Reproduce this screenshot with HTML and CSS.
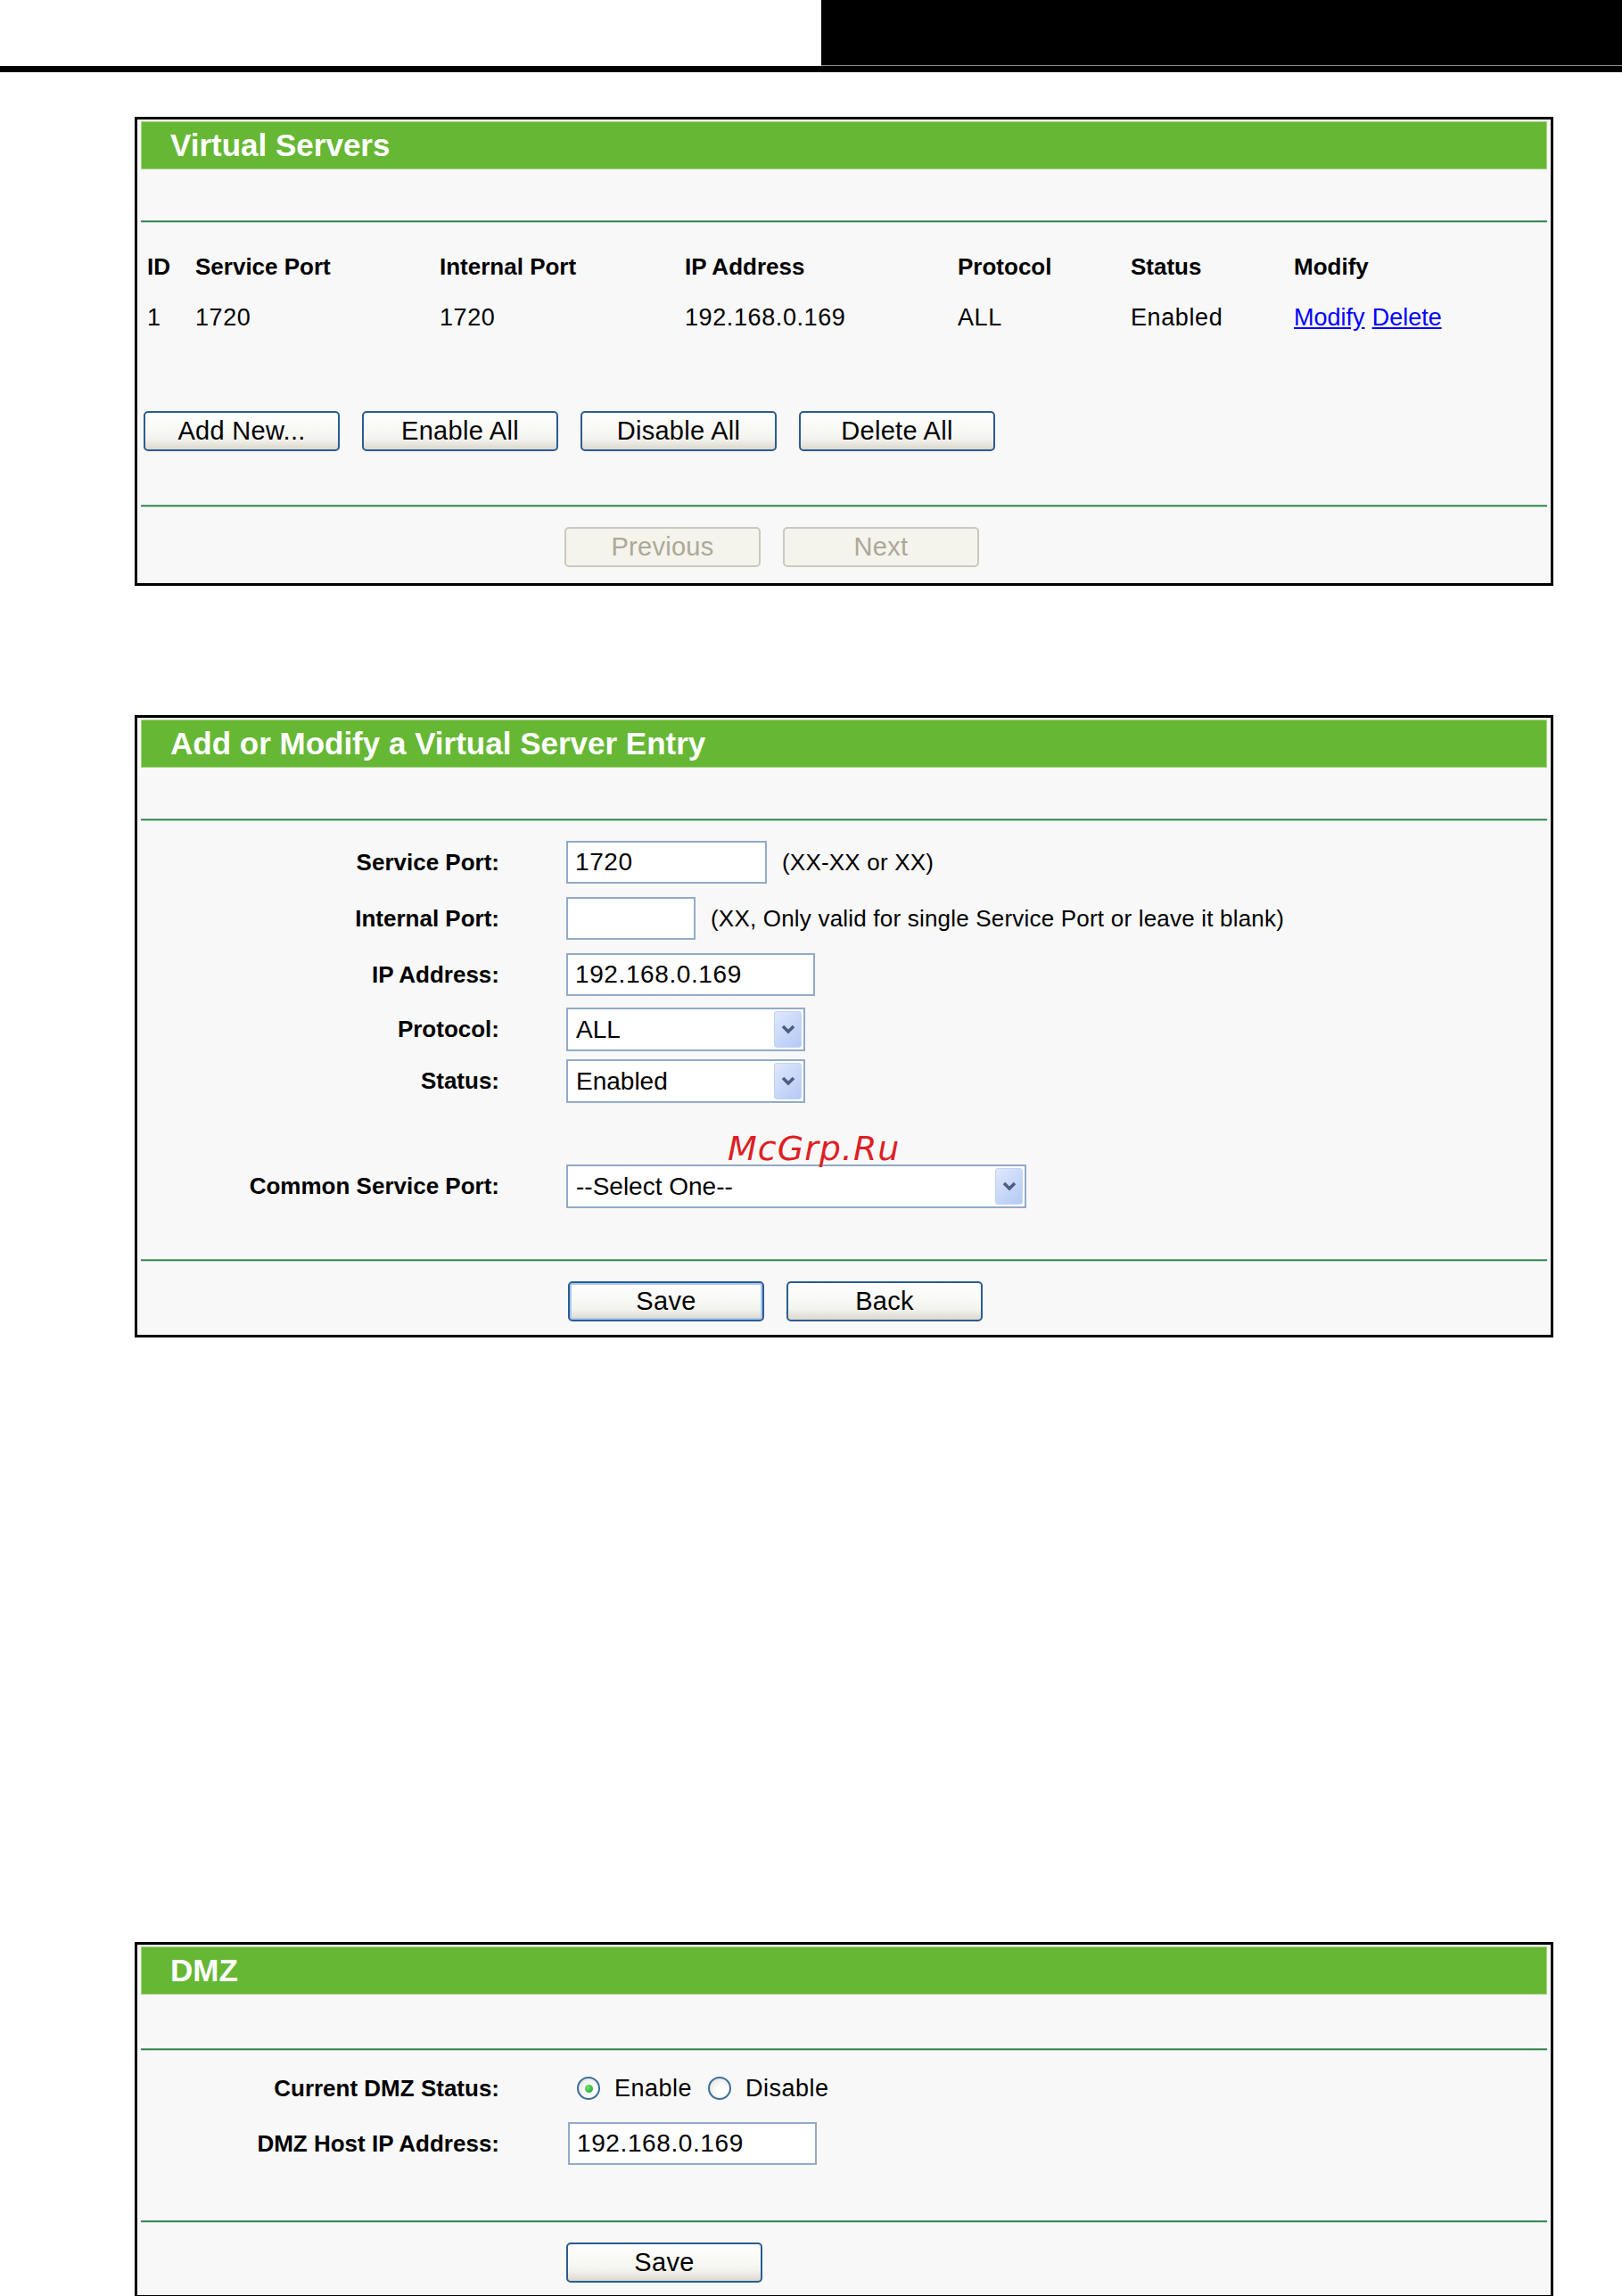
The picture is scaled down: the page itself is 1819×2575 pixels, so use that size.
FILE: index.html
```html
<!DOCTYPE html>
<html lang="en">
<head>
    <meta charset="UTF-8">
    <title>Virtual Servers</title>
    <link rel="stylesheet" href="styles.css">
</head>
<body>

    <div class="topbar">
        <div class="topbar-left"></div>
        <div class="topbar-right"></div>
    </div>
    <div class="topbar-rule"></div>

    <!-- Virtual servers list -->
    <div class="panel panel-list">
        <div class="panel-title">Virtual Servers</div>
        <div class="rule rule-first"></div>

        <div class="server-table">
            <div class="th">ID</div>
            <div class="th">Service Port</div>
            <div class="th">Internal Port</div>
            <div class="th">IP Address</div>
            <div class="th">Protocol</div>
            <div class="th">Status</div>
            <div class="th">Modify</div>

            <div class="td">1</div>
            <div class="td">1720</div>
            <div class="td">1720</div>
            <div class="td">192.168.0.169</div>
            <div class="td">ALL</div>
            <div class="td">Enabled</div>
            <div class="td"><a href="#">Modify</a> <a href="#">Delete</a></div>
        </div>

        <div class="btn-row btn-row-list">
            <button class="btn">Add New...</button>
            <button class="btn">Enable All</button>
            <button class="btn">Disable All</button>
            <button class="btn">Delete All</button>
        </div>

        <div class="rule rule-bottom"></div>
        <div class="btn-row btn-row-form">
            <button class="btn" disabled>Previous</button>
            <button class="btn" disabled>Next</button>
        </div>
    </div>

    <!-- Add / modify entry -->
    <div class="panel panel-entry">
        <div class="panel-title">Add or Modify a Virtual Server Entry</div>
        <div class="rule rule-first"></div>

        <div class="form">
            <div class="form-row row-service">
                <div class="form-label">Service Port:</div>
                <div class="form-field">
                    <div class="input input-port">1720</div>
                    <span class="hint">(XX-XX or XX)</span>
                </div>
            </div>
            <div class="form-row row-internal">
                <div class="form-label">Internal Port:</div>
                <div class="form-field">
                    <div class="input input-short"></div>
                    <span class="hint">(XX, Only valid for single Service Port or leave it blank)</span>
                </div>
            </div>
            <div class="form-row row-ip">
                <div class="form-label">IP Address:</div>
                <div class="form-field">
                    <div class="input input-ip">192.168.0.169</div>
                </div>
            </div>
            <div class="form-row row-protocol">
                <div class="form-label">Protocol:</div>
                <div class="form-field">
                    <div class="select select-small">ALL<span class="select-arrow"><svg width="18" height="13" viewBox="0 0 18 13"><path d="M3 3 L9 9 L15 3" fill="none" stroke="#4b5d82" stroke-width="3.5"/></svg></span></div>
                </div>
            </div>
            <div class="form-row row-status">
                <div class="form-label">Status:</div>
                <div class="form-field">
                    <div class="select select-small">Enabled<span class="select-arrow"><svg width="18" height="13" viewBox="0 0 18 13"><path d="M3 3 L9 9 L15 3" fill="none" stroke="#4b5d82" stroke-width="3.5"/></svg></span></div>
                </div>
            </div>
            <div class="form-row row-common">
                <div class="form-label">Common Service Port:</div>
                <div class="form-field">
                    <div class="select select-wide">--Select One--<span class="select-arrow"><svg width="18" height="13" viewBox="0 0 18 13"><path d="M3 3 L9 9 L15 3" fill="none" stroke="#4b5d82" stroke-width="3.5"/></svg></span></div>
                </div>
            </div>
        </div>

        <div class="watermark">McGrp.Ru</div>

        <div class="rule rule-form-end"></div>
        <div class="btn-row btn-row-form btn-row-entry">
            <button class="btn btn-default">Save</button>
            <button class="btn">Back</button>
        </div>
    </div>

    <!-- DMZ -->
    <div class="panel panel-dmz">
        <div class="panel-title">DMZ</div>
        <div class="rule rule-dmz"></div>

        <div class="form">
            <div class="form-row row-radio">
                <div class="form-label">Current DMZ Status:</div>
                <div class="form-field">
                    <span class="radio checked"></span><span class="radio-text">Enable</span>
                    <span class="radio"></span><span class="radio-text">Disable</span>
                </div>
            </div>
            <div class="form-row row-dmz-ip">
                <div class="form-label">DMZ Host IP Address:</div>
                <div class="form-field">
                    <div class="input input-ip">192.168.0.169</div>
                </div>
            </div>
        </div>

        <div class="rule rule-dmz-end"></div>
        <div class="btn-row btn-row-form btn-row-dmz">
            <button class="btn">Save</button>
        </div>
    </div>

</body>
</html>
```

FILE: styles.css
```css
body {
    margin: 0;
    background: #ffffff;
    font-family: "Liberation Sans", Arial, sans-serif;
    color: #000;
}

/* page header bar */
.topbar {
    display: flex;
    height: 74px;
}
.topbar-left {
    width: 921px;
}
.topbar-right {
    flex: 1;
    background: #000;
    border-bottom: 1px solid #8c8c8c;
}
.topbar-rule {
    height: 7px;
    background: #000;
}

/* panels */
.panel {
    position: relative;
    width: 1591px;
    margin-left: 151px;
    box-sizing: border-box;
    border: 3px solid #000;
    padding: 2px 4px 0;
    background: #f8f8f8;
}
.panel-list {
    margin-top: 50px;
    padding-bottom: 18px;
}
.panel-entry {
    margin-top: 145px;
    padding-bottom: 15px;
}
.panel-dmz {
    margin-top: 678px;
    padding-bottom: 14px;
}
.panel-title {
    height: 52px;
    line-height: 52px;
    background: #66b734;
    border: 1px solid #a3d582;
    padding-left: 32px;
    color: #fff;
    font-size: 35px;
    font-weight: bold;
}

.rule {
    height: 1px;
    background: #2c7a46;
    border-top: 1px solid #6fae83;
    border-bottom: 1px solid #b7dac1;
}
.rule-first {
    margin-top: 57px;
}
.rule-bottom {
    margin-top: 60px;
}
.rule-form-end {
    margin-top: 57px;
}
.rule-dmz {
    margin-top: 60px;
}
.rule-dmz-end {
    margin-top: 62px;
}

/* list table */
.server-table {
    display: grid;
    grid-template-columns: 54px 274px 275px 306px 194px 183px 1fr;
    grid-template-rows: 47px 67px;
    align-items: center;
    margin-top: 26px;
    padding-left: 7px;
}
.th {
    font-size: 26px;
    font-weight: bold;
}
.td {
    font-size: 27px;
    letter-spacing: 0.6px;
}
.td a {
    color: #0000ff;
    letter-spacing: 0;
}

/* buttons */
.btn-row {
    display: flex;
    gap: 25px;
}
.btn-row-list {
    margin-top: 71px;
    margin-left: 3px;
}
.btn-row-form {
    margin-top: 22px;
    margin-left: 475px;
}
.btn-row-entry {
    margin-left: 479px;
}
.btn-row-dmz {
    margin-left: 477px;
}
.btn {
    width: 220px;
    height: 45px;
    box-sizing: border-box;
    border: 2px solid #2b5c92;
    border-radius: 5px;
    background: linear-gradient(#ffffff, #f4f4ef 70%, #dcd8cd);
    font-family: "Liberation Sans", Arial, sans-serif;
    font-size: 29px;
    letter-spacing: 0.3px;
    color: #000;
    padding: 0;
}
.btn:disabled {
    border-color: #ccc9bb;
    background: #f4f3ec;
    color: #aca899;
}
.btn-default {
    box-shadow: inset 0 0 0 2px #a9c8f2;
}

/* form */
.form {
    margin-top: 22px;
}
.form-row {
    display: flex;
    align-items: center;
}
.form-label {
    width: 402px;
    text-align: right;
    font-size: 26px;
    font-weight: bold;
}
.form-field {
    display: flex;
    align-items: center;
    margin-left: 75px;
}
.row-internal,
.row-ip {
    margin-top: 15px;
}
.row-protocol {
    margin-top: 13px;
}
.row-status {
    margin-top: 9px;
}
.row-common {
    margin-top: 69px;
}
.row-radio {
    height: 40px;
    margin-top: 1px;
}
.row-dmz-ip {
    margin-top: 18px;
}
.row-dmz-ip .form-field {
    margin-left: 77px;
}

.input {
    height: 48px;
    box-sizing: border-box;
    border: 2px solid #92abc6;
    background: #fff;
    padding-left: 8px;
    font-size: 28px;
    letter-spacing: 0.6px;
    line-height: 44px;
}
.input-port {
    width: 225px;
}
.input-short {
    width: 145px;
}
.input-ip {
    width: 279px;
}
.hint {
    margin-left: 17px;
    font-size: 26px;
    letter-spacing: 0.2px;
}

.select {
    position: relative;
    height: 49px;
    box-sizing: border-box;
    border: 2px solid #92abc6;
    background: #fff;
    padding-left: 9px;
    font-size: 28px;
    line-height: 45px;
}
.select-small {
    width: 268px;
}
.select-wide {
    width: 516px;
}
.select-arrow {
    position: absolute;
    top: 2px;
    right: 2px;
    bottom: 2px;
    width: 31px;
    display: flex;
    align-items: center;
    justify-content: center;
    border-radius: 3px;
    background: linear-gradient(135deg, #dfe8fc, #b4c9f6);
    border: 1px solid #c3d3f3;
    box-sizing: border-box;
}

/* radios */
.radio {
    width: 26px;
    height: 26px;
    box-sizing: border-box;
    border: 2px solid #3d6d99;
    border-radius: 50%;
    background: radial-gradient(circle at 65% 65%, #ffffff 30%, #dcdcd6);
    display: flex;
    align-items: center;
    justify-content: center;
    margin-left: 18px;
}
.radio:first-child {
    margin-left: 12px;
}
.radio.checked::after {
    content: "";
    width: 9px;
    height: 9px;
    border-radius: 50%;
    background: radial-gradient(circle at 35% 35%, #6fe36f, #1e9a2a);
}
.radio-text {
    margin-left: 16px;
    font-size: 27px;
    letter-spacing: 0.5px;
}

.watermark {
    position: absolute;
    left: 662px;
    top: 464px;
    font-family: "DejaVu Sans", sans-serif;
    font-style: italic;
    font-size: 38px;
    line-height: 38px;
    color: #dd1f26;
    letter-spacing: 1px;
}
```
